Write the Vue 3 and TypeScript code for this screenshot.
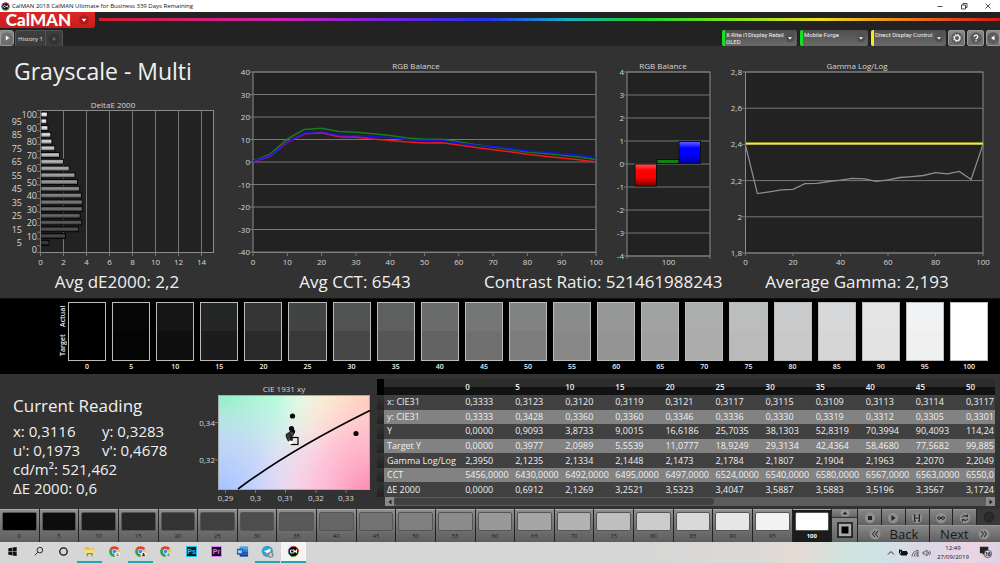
<script setup lang="ts">
type Pt = [number, number]

const levels: number[] = Array.from({ length: 21 }, (_, i) => i * 5)

/* Delta E per level, 0 to 100 */
const deltaE: number[] = [0, 0.69, 2.13, 3.25, 3.53, 3.4, 3.59, 3.59, 3.52, 3.36, 3.17, 2.95, 2.45, 1.95, 1.6, 1.2, 0.95, 0.85, 0.6, 0.5, 0.55]
const deY = (i: number): number => 153.5 - i * 6.75
const deX = (v: number): number => 40.5 + v * 11.5
const deBars = deltaE.map((v, i) => ({
  level: i * 5,
  y: deY(i),
  w: v * 11.5,
  shade: Math.round(12 + (i * 5) * 2.43),
}))

const rgbX = (v: number): number => 28 + v * 3.43
const rgbY = (v: number): number => 106 - v * 2.25
const line = (vals: number[], fx: (v: number) => number, fy: (v: number) => number): string =>
  vals.map((v, i) => `${fx(i * 5).toFixed(1)},${fy(v).toFixed(1)}`).join(' ')

const red = [0.5, 2.8, 9.3, 12.6, 13, 11.2, 11, 10.2, 9.6, 8.9, 8.5, 8.6, 7.6, 6.4, 5.4, 4.6, 3.4, 2.6, 1.8, 1, 0]
const green = [0.5, 3.5, 10.2, 14.5, 15, 13.5, 13.2, 12.6, 11.8, 10.7, 10.1, 10.1, 9, 7.7, 6.7, 5.6, 4.5, 3.8, 3, 2.2, 1.1]
const blue = [0.5, 2.8, 9, 12.9, 13.6, 11.9, 11.8, 11.4, 10.8, 10, 9.6, 9.6, 8.5, 7.4, 6.9, 6, 4.9, 4.4, 3.7, 3, 1.9]
const rgbTicksY = [40, 30, 20, 10, 0, -10, -20, -30, -40]
const rgbTicksX = [0, 10, 20, 30, 40, 50, 60, 70, 80, 90, 100]

const barY = (v: number): number => 108 - v * 23
const barTicks = [4, 3, 2, 1, 0, -1, -2, -3, -4]

const gamX = (v: number): number => 25.5 + v * 2.375
const gamY = (v: number): number => 197 - (v - 1.8) * 181
const gamma = [2.395, 2.128, 2.138, 2.149, 2.152, 2.183, 2.185, 2.195, 2.202, 2.212, 2.21, 2.196, 2.204, 2.217, 2.222, 2.228, 2.244, 2.237, 2.251, 2.206, 2.4]
const gamTicksY: [number, string][] = [[2.8, '2,8'], [2.6, '2,6'], [2.4, '2,4'], [2.2, '2,2'], [2, '2'], [1.8, '1,8']]
const gamTicksX = [0, 20, 40, 60, 80, 100]

const actual = ['#000000', '#060606', '#151515', '#242625', '#353535', '#424443', '#515352', '#5e605f', '#6a6c6b', '#757776', '#818382', '#8b8d8c', '#969897', '#a1a3a2', '#acaead', '#bcbebd', '#cacbcc', '#d7d8d9', '#e4e4e5', '#f1f2f3', '#ffffff']
const target = ['#000000', '#040404', '#0f0f0f', '#1c1c1c', '#2a2a2a', '#383838', '#474747', '#565656', '#636363', '#707070', '#7d7d7d', '#888888', '#949494', '#9f9f9f', '#acacac', '#bababa', '#c9c9c9', '#d6d6d6', '#e3e3e3', '#f0f0f0', '#ffffff']
const swatches = levels.map((level, i) => ({ level, bg: `linear-gradient(${actual[i]} 50%, ${target[i]} 50%)` }))
const patches = levels.map((level, i) => ({ level, bg: `rgb(${Array(3).fill(Math.round(i * 12.75)).join(',')})` }))

const cols = [0, 5, 10, 15, 20, 25, 30, 35, 40, 45, 50]
const rows: { name: string; v: string[] }[] = [
  { name: 'x: CIE31', v: ['0,3333', '0,3123', '0,3120', '0,3119', '0,3121', '0,3117', '0,3115', '0,3109', '0,3113', '0,3114', '0,3117'] },
  { name: 'y: CIE31', v: ['0,3333', '0,3428', '0,3360', '0,3360', '0,3346', '0,3336', '0,3330', '0,3319', '0,3312', '0,3305', '0,3301'] },
  { name: 'Y', v: ['0,0000', '0,9093', '3,8733', '9,0015', '16,6186', '25,7035', '38,1303', '52,8319', '70,3994', '90,4093', '114,24'] },
  { name: 'Target Y', v: ['0,0000', '0,3977', '2,0989', '5,5539', '11,0777', '18,9249', '29,3134', '42,4364', '58,4680', '77,5682', '99,885'] },
  { name: 'Gamma Log/Log', v: ['2,3950', '2,1235', '2,1334', '2,1448', '2,1473', '2,1784', '2,1807', '2,1904', '2,1963', '2,2070', '2,2049'] },
  { name: 'CCT', v: ['5456,0000', '6430,0000', '6492,0000', '6495,0000', '6497,0000', '6524,0000', '6540,0000', '6580,0000', '6567,0000', '6563,0000', '6550,0'] },
  { name: 'ΔE 2000', v: ['0,0000', '0,6912', '2,1269', '3,2521', '3,5323', '3,4047', '3,5887', '3,5883', '3,5196', '3,3567', '3,1724'] },
]

const cieX: [number, string][] = [[35.5, '0,29'], [65.5, '0,3'], [95.5, '0,31'], [126, '0,32'], [156, '0,33']]
const cieY: [number, string][] = [[38.5, '0,34'], [76, '0,32']]
const ciePts: Pt[] = [[102.5, 32], [166, 49.5], [101.5, 44.5], [102.5, 47.5]]
const cieGrey: Pt[] = [[101, 50], [98.5, 51.5], [99, 53], [100, 55]]

const devices = [
  { name: 'X-Rite i1Display Retail OLED', color: '#17e01c' },
  { name: 'Mobile Forge', color: '#17e01c' },
  { name: 'Direct Display Control', color: '#f2ee1a' },
]
</script>

<template>
  <div class="app">
    <header class="titlebar">
      <svg class="app-icon" viewBox="0 0 10 10" aria-hidden="true">
        <circle cx="5" cy="5" r="4.4" fill="#111" />
        <path d="M1 5a4 4 0 0 1 4-4" stroke="#d33ad0" fill="none" />
        <path d="M5 1a4 4 0 0 1 4 4" stroke="#e03030" fill="none" />
        <path d="M9 5a4 4 0 0 1-8 0" stroke="#2aa84a" fill="none" />
        <path d="M4.5 4a1.2 1.2 0 1 0 0 2M5.4 6V4l.9 1.2L7.200 4v2" stroke="#fff" stroke-width=".8" fill="none" />
      </svg>
      <span class="app-title">CalMAN 2018 CalMAN Ultimate for Business 339 Days Remaining</span>
      <div class="win-buttons">
        <button type="button" aria-label="Minimize"><svg viewBox="0 0 8 8"><path d="M1.500 4.500h5" /></svg></button>
        <button type="button" aria-label="Restore"><svg viewBox="0 0 8 8"><path d="M1.500 3h4v4h-4zM3 3V1.500h4v4H5.500" /></svg></button>
        <button type="button" aria-label="Close"><svg viewBox="0 0 8 8"><path d="M1.500 1.500l5 5M6.500 1.500l-5 5" /></svg></button>
      </div>
    </header>

    <div class="brandbar">
      <button type="button" class="logo">
        <span>CalMAN</span>
        <svg viewBox="0 0 10 10" aria-hidden="true"><circle cx="5" cy="5" r="4.800" fill="#b31818" /><path d="M2.500 3.800h5L5 6.800z" fill="#fff" /></svg>
      </button>
      <div class="rainbow"></div>
    </div>

    <nav class="tabs">
      <button type="button" class="tool play" aria-label="Open panel">
        <svg viewBox="0 0 12 12"><circle cx="6" cy="6" r="5.500" fill="#6f6f6f" /><path d="M4.800 3.500v5L8.300 6z" fill="#fff" /></svg>
      </button>
      <button type="button" class="tab">History 1</button>
      <button type="button" class="tab add" aria-label="Add tab">
        <svg viewBox="0 0 12 12"><circle cx="6" cy="6" r="5.500" fill="#333" /><path d="M6 4.500v3M4.500 6h3" stroke="#777" /></svg>
      </button>
      <div class="spacer"></div>
      <button v-for="d in devices" :key="d.name" type="button" class="device" aria-haspopup="listbox">
        <i :style="{ background: d.color }"></i>
        <span>{{ d.name }}</span>
        <svg viewBox="0 0 10 10" aria-hidden="true"><circle cx="5" cy="5" r="5" fill="#4e4e4e" /><path d="M2.500 4h5L5 7z" fill="#fff" /></svg>
      </button>
      <button type="button" class="tool" aria-label="Settings">
        <svg viewBox="0 0 12 12"><circle cx="6" cy="6" r="5.800" fill="#5b5b5b" /><circle cx="6" cy="6" r="2.600" fill="none" stroke="#eee" stroke-width="1.200" /><circle cx="6" cy="6" r="3.600" fill="none" stroke="#eee" stroke-width="1" stroke-dasharray="1.400 1.430" /></svg>
      </button>
      <button type="button" class="tool" aria-label="Help">
        <svg viewBox="0 0 12 12"><circle cx="6" cy="6" r="5.800" fill="#5b5b5b" /><path d="M4.200 4.800a1.800 1.600 0 1 1 2.600 1.400c-.6.3-.8.500-.8 1.100M6 8.300v1.200" fill="none" stroke="#fff" stroke-width="1.300" /></svg>
      </button>
      <button type="button" class="tool last" aria-label="Collapse">
        <svg viewBox="0 0 12 12"><circle cx="6" cy="6" r="5.800" fill="#5b5b5b" /><path d="M7.500 3.500v5L4 6z" fill="#fff" /></svg>
      </button>
    </nav>

    <main>
      <section class="charts">
        <div class="col-left">
          <h1>Grayscale - Multi</h1>
          <svg class="chart" viewBox="0 0 225 172" role="img" aria-label="DeltaE 2000">
            <defs>
              <linearGradient id="shine" x1="0" y1="0" x2="0" y2="1">
                <stop offset="0" stop-color="#000" stop-opacity=".35" />
                <stop offset=".35" stop-color="#fff" stop-opacity=".15" />
                <stop offset="1" stop-color="#000" stop-opacity=".45" />
              </linearGradient>
            </defs>
            <text x="113" y="12" class="mid">DeltaE 2000</text>
            <rect x="40.500" y="14.500" width="173" height="142" class="plot" />
            <path v-for="n in 7" :key="n" :d="`M${deX(n * 2)} 14.500V160`" class="grid" />
            <path v-for="n in 22" :key="'t' + n" :d="`M37 ${14.500 + (n - 1) * 6.76}h3.500`" class="grid" />
            <g v-for="b in deBars" :key="b.level">
              <template v-if="b.w">
                <rect x="41" :y="b.y - 2.500" :width="b.w" height="5" :fill="`rgb(${b.shade},${b.shade},${b.shade})`" stroke="#080808" stroke-width="1" />
                <rect x="41" :y="b.y - 2" :width="b.w - 0.500" height="4" fill="url(#shine)" />
              </template>
              <text :x="b.level % 10 ? 22 : 37" :y="b.y + 3.500" class="end big">{{ b.level }}</text>
            </g>
            <path d="M40.500 14v146" class="grid" />
            <text v-for="n in 8" :key="'x' + n" :x="deX((n - 1) * 2)" y="169" class="mid">{{ (n - 1) * 2 }}</text>
          </svg>
        </div>

        <svg class="chart" viewBox="0 0 380 212" role="img" aria-label="RGB Balance">
          <text x="191" y="13" class="mid">RGB Balance</text>
          <rect x="28" y="16" width="343" height="180.500" class="plot" />
          <template v-for="t in rgbTicksY" :key="t">
            <path :d="`M25 ${rgbY(t)}H371`" class="grid" />
            <text x="25" :y="rgbY(t) + 3" class="end">{{ t }}</text>
          </template>
          <template v-for="t in rgbTicksX" :key="'x' + t">
            <path :d="`M${rgbX(t)} 196v4`" class="grid" />
            <text :x="rgbX(t)" y="209" class="mid">{{ t }}</text>
          </template>
          <g fill="none" stroke-width="1.500" stroke-linejoin="round">
            <polyline :points="line(red, rgbX, rgbY)" stroke="#f01818" />
            <polyline :points="line(green, rgbX, rgbY)" stroke="#128012" />
            <polyline :points="line(blue, rgbX, rgbY)" stroke="#1414e6" />
            <polyline :points="line(red.slice(0, 8).map((v, i) => Math.min(v + 0.3, blue[i] - 0.5)), rgbX, rgbY)" stroke="#7a14b4" stroke-width="1" />
          </g>
        </svg>

        <svg class="chart" viewBox="0 0 115 212" role="img" aria-label="RGB Balance at 100">
          <defs>
            <linearGradient id="redBar" x1="0" y1="0" x2="0" y2="1"><stop offset="0" stop-color="#f55" /><stop offset=".3" stop-color="#f00" /><stop offset=".6" stop-color="#f00" /><stop offset="1" stop-color="#700" /></linearGradient>
            <linearGradient id="blueBar" x1="0" y1="0" x2="0" y2="1"><stop offset="0" stop-color="#66f" /><stop offset=".3" stop-color="#00f" /><stop offset=".6" stop-color="#00f" /><stop offset="1" stop-color="#009" /></linearGradient>
          </defs>
          <text x="58" y="13" class="mid">RGB Balance</text>
          <rect x="22" y="16" width="83" height="184" class="plot" />
          <template v-for="t in barTicks" :key="t">
            <path :d="`M19 ${barY(t)}H105`" class="grid" />
            <text x="19" :y="barY(t) + 3" class="end">{{ t }}</text>
          </template>
          <path d="M22 200v3M105 200v3" class="grid" />
          <rect x="30" y="108" width="21.500" height="22" fill="url(#redBar)" stroke="#111" />
          <rect x="52" y="103.500" width="22" height="4" fill="#128012" stroke="#111" />
          <rect x="74" y="85.500" width="21.500" height="22" fill="url(#blueBar)" stroke="#111" />
          <text x="63.500" y="209" class="mid">100</text>
        </svg>

        <svg class="chart" viewBox="0 0 280 212" role="img" aria-label="Gamma Log/Log">
          <text x="137" y="13" class="mid">Gamma Log/Log</text>
          <rect x="25.500" y="16" width="237.500" height="181" class="plot" />
          <template v-for="t in gamTicksY" :key="t[1]">
            <path :d="`M22 ${gamY(t[0])}H263`" class="grid" />
            <text x="22" :y="gamY(t[0]) + 3" class="end">{{ t[1] }}</text>
          </template>
          <template v-for="t in gamTicksX" :key="'x' + t">
            <path :d="`M${gamX(t)} 197v3`" class="grid" />
            <text :x="gamX(t)" y="209" class="mid">{{ t }}</text>
          </template>
          <polyline :points="line(gamma, gamX, gamY)" fill="none" stroke="#8d8d8d" stroke-width="1.300" />
          <path d="M26 87.500H263" stroke="#f5ef2a" stroke-width="2" />
        </svg>
      </section>

      <section class="stats">
        <p>Avg dE2000: 2,2</p>
        <p>Avg CCT: 6543</p>
        <p class="contrast">Contrast Ratio: 521461988243</p>
        <p class="gamma">Average Gamma: 2,193</p>
      </section>

      <section class="swatch-band">
        <div class="axis"><span>Target</span><span>Actual</span></div>
        <figure v-for="s in swatches" :key="s.level">
          <div :style="{ background: s.bg }"></div>
          <figcaption>{{ s.level }}</figcaption>
        </figure>
      </section>

      <section class="lower">
        <div class="reading">
          <h2>Current Reading</h2>
          <div class="pairs">
            <span>x: 0,3116</span><span>y: 0,3283</span>
            <span>u': 0,1973</span><span>v': 0,4678</span>
          </div>
          <p>cd/m²: 521,462</p>
          <p>ΔE 2000: 0,6</p>
        </div>

        <svg class="chart cie" viewBox="0 0 187 122" role="img" aria-label="CIE 1931 xy">
          <defs>
            <radialGradient id="tl" gradientUnits="userSpaceOnUse" cx="28" cy="12" r="140"><stop offset="0" stop-color="#7df5b8" /><stop offset=".4" stop-color="#a4fbd6" stop-opacity=".8" /><stop offset="1" stop-color="#e4fff0" stop-opacity="0" /></radialGradient>
            <radialGradient id="tr" gradientUnits="userSpaceOnUse" cx="180" cy="20" r="90"><stop offset="0" stop-color="#ffd0a8" /><stop offset=".5" stop-color="#ffeec0" stop-opacity=".7" /><stop offset="1" stop-color="#fff8d8" stop-opacity="0" /></radialGradient>
            <radialGradient id="bl" gradientUnits="userSpaceOnUse" cx="28" cy="108" r="110"><stop offset="0" stop-color="#a0c0ff" /><stop offset=".5" stop-color="#c8ccff" stop-opacity=".7" /><stop offset="1" stop-color="#e8dcff" stop-opacity="0" /></radialGradient>
            <radialGradient id="br" gradientUnits="userSpaceOnUse" cx="184" cy="108" r="120"><stop offset="0" stop-color="#ff86b0" /><stop offset=".5" stop-color="#ffb0d0" stop-opacity=".7" /><stop offset="1" stop-color="#ffd8f0" stop-opacity="0" /></radialGradient>
          </defs>
          <text x="94" y="8" class="mid">CIE 1931 xy</text>
          <rect x="28.500" y="11.500" width="151" height="94" fill="#fbf6f6" />
          <rect v-for="g in ['tl', 'tr', 'bl', 'br']" :key="g" x="28.500" y="11.500" width="151" height="94" :fill="`url(#${g})`" />
          <rect x="28.500" y="11.500" width="151" height="94" fill="none" stroke="#aaa" />
          <path d="M48 105Q100 66 180 26.500" fill="none" stroke="#000" stroke-width="1.600" />
          <circle v-for="(p, i) in ciePts" :key="i" :cx="p[0]" :cy="p[1]" r="2.600" fill="#0a0a0a" />
          <circle v-for="(p, i) in cieGrey" :key="'g' + i" :cx="p[0]" :cy="p[1]" r="2.600" fill="#444" stroke="#111" stroke-width=".6" />
          <rect x="101" y="53.500" width="7" height="7" fill="none" stroke="#000" stroke-width="1.200" />
          <circle cx="100.500" cy="58.500" r="2" fill="#fff" />
          <template v-for="t in cieY" :key="t[1]">
            <path :d="`M25 ${t[0]}h3`" class="grid" /><text x="25" :y="t[0] + 3" class="end">{{ t[1] }}</text>
          </template>
          <template v-for="t in cieX" :key="t[1]">
            <path :d="`M${t[0]} 106v3`" class="grid" /><text :x="t[0]" y="117" class="mid">{{ t[1] }}</text>
          </template>
        </svg>

        <div class="data">
          <div class="clip">
            <table>
              <colgroup><col class="c-grip" /><col class="c-name" /><col v-for="c in cols" :key="c" /></colgroup>
              <thead>
                <tr><td class="grip"></td><td></td><th v-for="c in cols" :key="c" scope="col">{{ c }}</th></tr>
              </thead>
              <tbody>
                <tr v-for="r in rows" :key="r.name">
                  <td class="grip"></td><th scope="row">{{ r.name }}</th>
                  <td v-for="(v, i) in r.v" :key="i">{{ v }}</td>
                </tr>
              </tbody>
            </table>
          </div>
          <div class="scroll">
            <button type="button" aria-label="Scroll left"><svg viewBox="0 0 8 8"><path d="M5.500 1.500v5L2.500 4z" /></svg></button>
            <div class="track"><div class="thumb"></div></div>
            <button type="button" aria-label="Scroll right"><svg viewBox="0 0 8 8"><path d="M2.500 1.500v5L5.500 4z" /></svg></button>
          </div>
        </div>
      </section>
    </main>

    <section class="patchbar">
      <button v-for="p in patches" :key="p.level" type="button" class="patch" :class="{ active: p.level === 100 }">
        <i :style="{ background: p.bg }"></i><span>{{ p.level }}</span>
      </button>
      <div class="window-ctl">
        <button type="button" class="up" aria-label="Raise"><svg viewBox="0 0 12 8"><ellipse cx="6" cy="4" rx="4.500" ry="3.500" fill="#999" /><path d="M3.500 5.500L6 2.500l2.500 3z" fill="#222" /></svg></button>
        <button type="button" class="square" aria-label="Pattern window"><svg viewBox="0 0 16 16"><rect x="1" y="1" width="14" height="14" fill="#aaa" stroke="#111" stroke-width="1.500" /><rect x="4.500" y="4.500" width="7" height="7" fill="#000" /></svg></button>
      </div>
      <div class="controls">
        <div class="transport">
          <button type="button" aria-label="Stop"><svg viewBox="0 0 12 12"><circle cx="6" cy="6" r="5.200" /><path d="M4 4h4v4H4z" fill="#222" /></svg></button>
          <button type="button" aria-label="Play"><svg viewBox="0 0 12 12"><circle cx="6" cy="6" r="5.200" /><path d="M4.500 3v6l4-3z" fill="#222" /></svg></button>
          <button type="button" aria-label="Read series"><svg viewBox="0 0 12 12"><circle cx="6" cy="6" r="5.200" /><path d="M3.500 2.500v7M8.500 2.500v7M3.500 6h5M3.500 3h1.500M7 3h1.500M3.500 9h1.500M7 9h1.500" stroke="#222" fill="none" /></svg></button>
          <button type="button" aria-label="Continuous"><svg viewBox="0 0 12 12"><circle cx="6" cy="6" r="5.200" /><path d="M6 6C5 4.300 2.500 4.300 2.500 6S5 7.700 6 6s3.500-1.700 3.500 0S7 7.700 6 6z" stroke="#222" fill="none" /></svg></button>
          <button type="button" aria-label="Refresh"><svg viewBox="0 0 12 12"><circle cx="6" cy="6" r="5.200" /><path d="M3 5.500C3.400 3.500 6.500 3 8 4.200M9 6.500C8.600 8.500 5.500 9 4 7.800M8.500 2.500v2H6.500M3.500 9.500v-2h2" stroke="#222" fill="none" /></svg></button>
          <div class="lamp"><svg viewBox="0 0 12 12"><circle cx="6" cy="6" r="5" fill="#2b2b2b" stroke="#222" /></svg></div>
        </div>
        <div class="paging">
          <button type="button"><svg viewBox="0 0 12 12"><circle cx="6" cy="6" r="5.500" /><path d="M6 3L3.500 6 6 9M9 3L6.500 6 9 9" stroke="#222" fill="none" /></svg>Back</button>
          <button type="button">Next<svg viewBox="0 0 12 12"><circle cx="6" cy="6" r="5.500" /><path d="M3 3l2.500 3L3 9M6 3l2.500 3L6 9" stroke="#222" fill="none" /></svg></button>
        </div>
      </div>
    </section>

    <footer class="taskbar">
      <button type="button" aria-label="Start"><svg viewBox="0 0 14 14"><path d="M2.500 3.500l4-.600v3.800h-4zM7 2.800l4.500-.700v4.600H7zM2.500 7.200h4V11l-4-.600zM7 7.200h4.500v4.700L7 11.200z" fill="#111" /></svg></button>
      <button type="button" aria-label="Search"><svg viewBox="0 0 14 14"><circle cx="8.500" cy="5.500" r="3" fill="none" stroke="#222" /><path d="M6.300 7.700L3 11.200" stroke="#222" /></svg></button>
      <button type="button" aria-label="Cortana"><svg viewBox="0 0 14 14"><circle cx="7" cy="7" r="4" fill="none" stroke="#111" stroke-width="1.400" /></svg></button>
      <button type="button" class="open" aria-label="File Explorer"><svg viewBox="0 0 14 14"><path d="M2 2.500h4l1 1.300h5v8H2z" fill="#e9b93a" /><path d="M2 5h10.500v7H2z" fill="#fbdc78" /><path d="M4 12V8.500h6.500V12H9V10H5.500v2z" fill="#3b9be0" /></svg></button>
      <button v-for="n in 3" :key="n" type="button" :class="{ open: n === 2 }" :aria-label="`Chrome ${n}`">
        <svg viewBox="0 0 14 14">
          <path d="M7 7L2 4.100A5.800 5.800 0 0 1 12 4.100z" fill="#e2402f" />
          <path d="M7 7L12 4.100A5.800 5.800 0 0 1 7 12.800z" fill="#f7c629" />
          <path d="M7 7v5.800A5.800 5.800 0 0 1 2 4.100z" fill="#30a352" />
          <circle cx="7" cy="7" r="2.700" fill="#fff" /><circle cx="7" cy="7" r="2.100" fill="#4384ee" />
          <circle cx="10.300" cy="10.300" r="3" :fill="n === 3 ? '#cfe3e4' : '#f2eeee'" />
          <circle cx="10.300" cy="9.700" r="1.100" :fill="n === 2 ? '#222' : n === 1 ? '#a98fb0' : '#6f9c91'" />
          <path d="M8.500 12a1.800 1.500 0 0 1 3.600 0z" :fill="n === 2 ? '#333' : '#7c9fb0'" />
        </svg>
      </button>
      <button type="button" class="tile ps" aria-label="Photoshop"><b>Ps</b></button>
      <button type="button" class="tile pr" aria-label="Premiere Pro"><b>Pr</b></button>
      <button type="button" aria-label="Word"><svg viewBox="0 0 14 14"><path d="M4 1.500h9v3H4z" fill="#41a5ee" /><path d="M4 4.500h9v3H4z" fill="#2b7cd3" /><path d="M4 7.500h9v2.500H4z" fill="#185abd" /><path d="M4 10h9v2.500H4z" fill="#103f91" /><rect x="1" y="4" width="6.500" height="6.500" fill="#185abd" /><path d="M2.200 5.500l.9 3.300 1.100-3 1.100 3 .9-3.300" fill="none" stroke="#fff" stroke-width=".8" /></svg></button>
      <button type="button" class="open" aria-label="Telegram"><svg viewBox="0 0 14 14"><circle cx="6.800" cy="6.800" r="6" fill="#33a0d9" /><path d="M3 6.800l7.500-3L9.300 10 6.900 8.300 5.700 9.500l-.2-2z" fill="#fff" /><circle cx="10.300" cy="10.500" r="3.300" fill="#8b8f92" /><path d="M10.800 12.300V8.800L9 11.200h2.600" fill="none" stroke="#fff" stroke-width=".7" /></svg></button>
      <button type="button" class="open current" aria-label="CalMAN">
        <svg viewBox="0 0 14 14"><circle cx="7" cy="7" r="5.600" fill="#080808" /><path d="M1.400 7A5.600 5.600 0 0 1 7 1.400" stroke="#c73ad0" fill="none" /><path d="M7 1.400A5.600 5.600 0 0 1 12.600 7" stroke="#e8432a" fill="none" /><path d="M12.600 7A5.600 5.600 0 0 1 7 12.600" stroke="#d6c928" fill="none" /><path d="M7 12.600A5.600 5.600 0 0 1 1.400 7" stroke="#23a65a" fill="none" /><path d="M6.200 5.800a1.600 1.600 0 1 0 0 2.400M7.400 9V5.400l1.500 2 1.500-2V9" stroke="#fff" stroke-width="1.100" fill="none" /></svg>
      </button>
      <div class="spacer"></div>
      <div class="tray">
        <svg viewBox="0 0 10 10"><path d="M2 6.500l3-3 3 3" fill="none" stroke="#222" /></svg>
        <svg viewBox="0 0 10 10"><path d="M3 3h6v4.500H3z" fill="#111" /><path d="M1 2.500h3M1.500 1.500v3.500M3 1.500v3M2.200 5v2" stroke="#111" fill="none" /><path d="M9 4.500h1v1.500H9z" fill="#111" /></svg>
        <svg viewBox="0 0 10 10"><path d="M2 8.500a6 6 0 0 1 6-6M4 8.500a4 4 0 0 1 4-4M6 8.500a2 2 0 0 1 2-2M8 2v7" fill="none" stroke="#444" stroke-width=".8" /></svg>
        <svg viewBox="0 0 10 10"><path d="M1 4h1.500L5 2v6L2.500 6H1zM6.200 3.800q1 1.200 0 2.400M7.500 2.800q1.800 2.200 0 4.400" fill="none" stroke="#444" stroke-width=".8" /></svg>
      </div>
      <div class="clock"><span>12:49</span><span>27/09/2019</span></div>
      <button type="button" class="notify" aria-label="16 notifications"><svg viewBox="0 0 14 14"><path d="M1 2h9v7H6l-2 2V9H1z" fill="#222" /><circle cx="9.500" cy="9.500" r="4" fill="#d9d4dc" stroke="#333" stroke-width=".8" /></svg><b>16</b></button>
    </footer>
  </div>
</template>

<style>
body { background: #323232; }
</style>

<style scoped>
* { box-sizing: border-box; }
.app { min-height: 100vh; display: flex; flex-direction: column; background: #323232; color: #f0f0f0; font-family: "Open Sans", "Noto Sans", sans-serif; overflow: hidden; }
button { font: inherit; color: inherit; border: 0; padding: 0; margin: 0; background: none; display: flex; align-items: center; justify-content: center; }
h1, h2, p, figure { margin: 0; font-weight: 400; }
.spacer { flex: 1; }

.titlebar { height: 12px; background: #fff; color: #111; display: flex; align-items: center; }
.app-icon { width: 9px; height: 9px; margin: 0 2px 0 1px; }
.app-title { flex: 1; font: 6px/12px "Open Sans", sans-serif; white-space: nowrap; }
.win-buttons { display: flex; }
.win-buttons button { width: 24px; }
.win-buttons svg { width: 8px; height: 8px; fill: none; stroke: #222; stroke-width: .8; }

.brandbar { height: 18px; background: #222; display: flex; align-items: flex-start; }
.logo { width: 95px; height: 16px; background: linear-gradient(#dc2626, #c81c1c); border-radius: 0 0 3px 0; color: #fff; gap: 8px; }
.logo span { font: 900 17px/16px Lato, sans-serif; }
.logo svg { width: 10px; height: 10px; }
.rainbow { flex: 1; height: 3px; margin: 6px 0 0 4px; background: linear-gradient(90deg, #d81c30, #d020b0 20%, #7a20e0 32%, #2430f0 43%, #18b0c0 52%, #18d030 60%, #80e020 70%, #f0e020 80%, #f07818 90%, #d81818); }

.tabs { height: 16px; background: #222; display: flex; align-items: stretch; }
.tool { width: 17px; margin-left: 2px; background: linear-gradient(#8a8a8a, #6c6c6c); border: 1px solid #999; border-radius: 2px; }
.tool svg { width: 12px; height: 12px; flex: none; }
.tool.play { width: 14px; margin: 0 1px 0 0; border-radius: 0 3px 3px 0; }
.tool.last { width: 14px; border-radius: 2px 0 0 2px; }
.tab { background: #3d3d3d; border: 1px solid #555; border-bottom: 0; border-radius: 3px 0 0 0; font-size: 6px; width: 31px; color: #e4e4e4; white-space: nowrap; }
.tab.add { width: 17px; border-left: 0; border-radius: 0 3px 0 0; }
.tab svg { width: 12px; height: 12px; flex: none; }
.device { width: 75px; margin-right: 3px; background: linear-gradient(#4e4e4e, #6a6a6a); border-radius: 2px; align-items: stretch; overflow: hidden; }
.device:nth-of-type(5) { width: 68px; }
.device:nth-of-type(6) { margin-right: 0; }
.device i { width: 3px; flex: none; }
.device span { flex: 1; text-align: left; font: 6px/7px Roboto, sans-serif; padding: 1px 0 0 1px; }
.device svg { width: 8px; flex: none; margin-right: 3px; }

main { flex: 1; display: flex; flex-direction: column; }
.charts { display: grid; grid-template-columns: 225fr 380fr 115fr 280fr; padding-top: 10px; align-items: start; }
.col-left h1 { font-size: 23px; line-height: 30px; height: 40px; padding-left: 14px; white-space: nowrap; }
.chart { display: block; width: 100%; height: auto; }
.chart text { font-size: 8px; fill: #d6d6d6; }
.chart text.big { font-size: 9px; }
.mid { text-anchor: middle; }
.end { text-anchor: end; }
.plot { fill: #222; stroke: #8c8c8c; }
.grid { stroke: #777; fill: none; }

.stats { display: grid; grid-template-columns: 234fr 242fr 253fr 271fr; height: 31px; border-bottom: 1px solid #111; font-size: 17px; line-height: 28px; text-align: center; white-space: nowrap; }
.stats .contrast { text-align: left; padding-left: 8px; }
.stats .gamma { padding-right: 15px; }

.swatch-band { height: 75px; background: #000; display: flex; gap: 6px; padding: 3px 12px 0 58px; }
.axis { width: 10px; margin-right: -6px; height: 58px; display: flex; justify-content: space-around; writing-mode: vertical-rl; transform: rotate(180deg); font: 600 7px/10px "Open Sans", sans-serif; }
figure { flex: 1; }
figure div { height: 59px; border: 1px solid #bbb; }
figcaption { text-align: center; font: 600 7px/12px "Open Sans", sans-serif; }

.lower { flex: 1; display: grid; grid-template-columns: 190fr 187fr 623fr; align-items: start; }
.reading { padding: 20px 0 0 13px; font-size: 15px; line-height: 19px; white-space: nowrap; }
.reading h2 { font-size: 17px; line-height: 24px; margin-bottom: 4px; }
.pairs { display: grid; grid-template-columns: 89px 1fr; }
.cie { margin-top: 10px; }
.data { padding: 5px 5px 0 0; min-width: 0; }
.clip { overflow: hidden; }
table { table-layout: fixed; width: 638px; height: 118px; border-collapse: collapse; font-size: 9px; line-height: 12px; }
col { width: 50px; }
.c-grip { width: 7px; }
.c-name { width: 80px; }
td, th { padding: 0 0 0 1px; text-align: left; font-weight: 400; white-space: nowrap; }
tbody th { padding-left: 3px; }
thead tr { height: 16px; background: linear-gradient(#2c2c2c 50%, #121212 50%); }
thead th { font-weight: 600; font-size: 8px; }
tbody tr { height: 14px; background: #414141; }
tbody tr:nth-child(even) { background: #828282; }
.grip { background: linear-gradient(#333, #222); }
thead .grip { background: #000; }
.scroll { display: flex; height: 9px; margin-left: 8px; background: #5c5c5c; }
.scroll button { width: 9px; background: #8a8a8a; }
.scroll svg { width: 8px; height: 8px; fill: #222; }
.track { flex: 1; }
.thumb { width: 54%; height: 7px; margin-top: 1px; border-radius: 4px; background: #414141; }

.patchbar { height: 33px; background: #222; display: flex; }
.patch { flex: 1; margin-right: 1px; flex-direction: column; justify-content: flex-start; padding: 2px 2px 0; background: linear-gradient(#8c8c8c, #5e5e5e); border-top: 1px solid #aaa; color: #1c1c1c; }
.patch i { width: 100%; height: 19px; border: 1px solid #555; border-radius: 2px; }
.patch span { font: 6px/10px "Open Sans", sans-serif; }
.patch.active { background: #1c1c1c; color: #fff; }
.patch.active span { font-weight: 700; }
.window-ctl { width: 25px; display: flex; flex-direction: column; margin-right: 1px; }
.window-ctl button { background: linear-gradient(#888, #666); }
.up { height: 9px; border-bottom: 1px solid #333; }
.up svg { width: 12px; height: 8px; }
.square { flex: 1; }
.square svg { width: 16px; height: 16px; }
.controls { width: 142px; display: flex; flex-direction: column; }
.transport, .paging { display: flex; gap: 1px; height: 16px; }
.paging { height: 17px; }
.transport button, .paging button, .lamp { flex: 1; background: linear-gradient(#868686, #606060); border-top: 1px solid #999; }
.transport .lamp { background: #383838; border: 0; display: flex; align-items: center; justify-content: center; }
.controls svg { width: 12px; height: 12px; fill: #8f8f8f; }
.paging button { font-size: 13px; line-height: 16px; gap: 9px; color: #1a1a1a; }

.taskbar { height: 21px; display: flex; align-items: stretch; background: linear-gradient(90deg, #d6d6d6 62%, #dcdad8 76%, #e6dad4 80%, #d2e2dc 84%, #cfe2e4 88%, #dcd6e6 93%, #ecd4e2 97%, #dcd2e4); color: #111; }
.taskbar button { width: 25px; border-bottom: 2px solid transparent; margin-right: 1px; }
.taskbar button:nth-child(2n) { margin-right: 0; }
.taskbar svg { width: 13px; height: 13px; }
.taskbar .open { border-bottom-color: #19a9b8; }
.taskbar .current { background: #f4f4f4; }
.tile b { width: 11px; height: 11px; border: 1px solid; font: 700 7px/9px "Liberation Sans", sans-serif; }
.ps b { background: #05202e; color: #26c0ea; }
.pr b { background: #24062e; color: #d67cf4; }
.tray { display: flex; align-items: center; gap: 2px; margin-right: 4px; }
.tray svg { width: 10px; height: 10px; }
.clock { width: 34px; display: flex; flex-direction: column; align-items: center; justify-content: center; font: 6px/9px "Open Sans", sans-serif; }
.taskbar .notify { width: 30px; position: relative; }
.notify b { position: absolute; left: 15px; top: 9px; font: 700 5px/7px "Open Sans", sans-serif; }
</style>
